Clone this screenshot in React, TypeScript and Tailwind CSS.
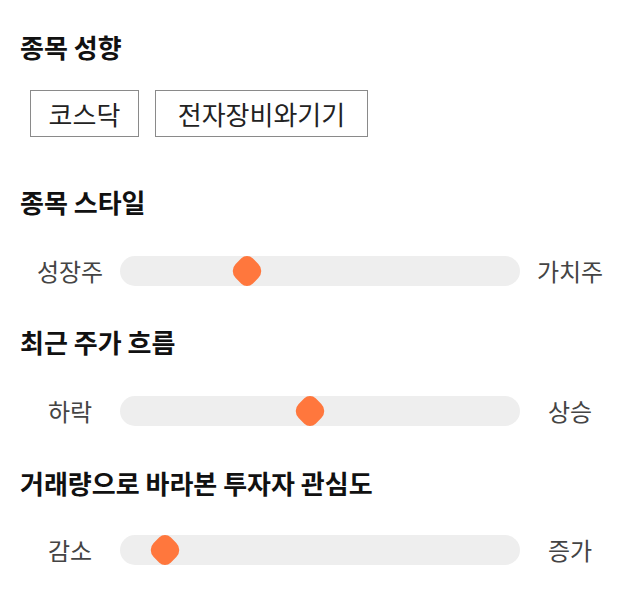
import React from "react";

const FONT = { fontFamily: '"Noto Sans CJK KR", "Noto Sans", sans-serif' };

function Heading({ children, className = "" }: { children: React.ReactNode; className?: string }) {
  return (
    <h2 className={`text-[26px] leading-[32px] font-bold text-[#111111] ${className}`}>{children}</h2>
  );
}

function Slider({ left, right, pos, className = "" }: { left: string; right: string; pos: number; className?: string }) {
  return (
    <div className={`flex items-center h-[30px] ${className}`}>
      <div className="w-[100px] text-center text-[24px] leading-[30px] text-[#444444]">{left}</div>
      <div className="relative w-[400px] h-[30px] rounded-full bg-[#eeeeee]">
        <div
          className="absolute top-1/2 w-[26px] h-[26px] -translate-x-1/2 -translate-y-1/2 rotate-45 bg-[#ff773d] rounded-tl-[8px] rounded-br-[8px] rounded-tr-[10px] rounded-bl-[10px]"
          style={{ left: `${pos}px` }}
        />
      </div>
      <div className="w-[100px] text-center text-[24px] leading-[30px] text-[#444444]">{right}</div>
    </div>
  );
}

export default function App() {
  return (
    <div className="w-[640px] h-[606px] bg-white px-5 pt-[31px]" style={FONT}>
      <Heading>종목 성향</Heading>
      <div className="flex gap-4 ml-[10px] mt-[27px]">
        <div className="h-[47px] w-[109px] flex items-center justify-center border border-[#8a8a8a] text-[26px] text-[#222222]">
          코스닥
        </div>
        <div className="h-[47px] w-[213px] flex items-center justify-center border border-[#8a8a8a] text-[26px] text-[#222222]">
          전자장비와기기
        </div>
      </div>
      <Heading className="mt-[49px]">종목 스타일</Heading>
      <Slider className="mt-[38px]" left="성장주" right="가치주" pos={127} />
      <Heading className="mt-[40px]">최근 주가 흐름</Heading>
      <Slider className="mt-[38px]" left="하락" right="상승" pos={190} />
      <Heading className="mt-[41px]">거래량으로 바라본 투자자 관심도</Heading>
      <Slider className="mt-[36px]" left="감소" right="증가" pos={45} />
    </div>
  );
}
